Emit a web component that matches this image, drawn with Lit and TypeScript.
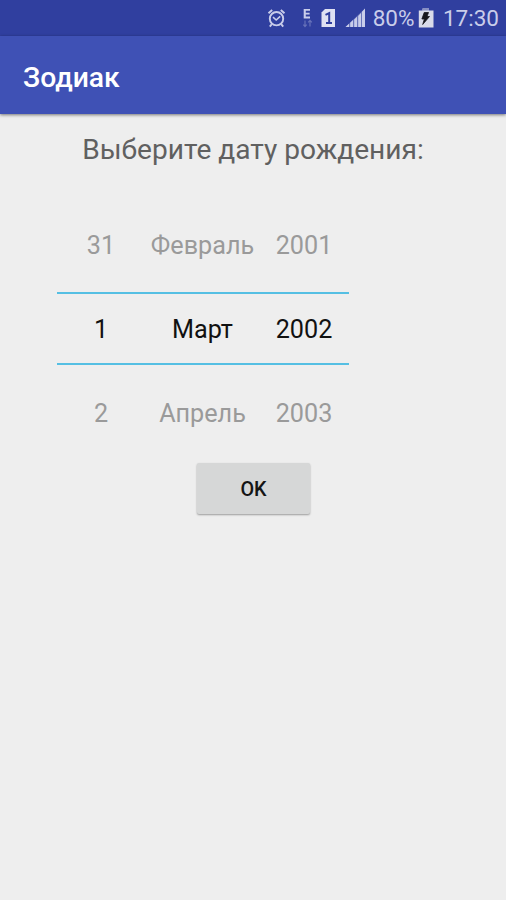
import { LitElement, html, css } from "lit";
import { customElement, property } from "lit/decorators.js";

@customElement("status-bar")
class StatusBar extends LitElement {
  static styles = css`
    :host {
      display: flex;
      align-items: center;
      justify-content: flex-end;
      box-sizing: border-box;
      height: 36px;
      padding-right: 7px;
      background: #303f9f;
      color: #c9cdea;
      font-size: 22.5px;
      line-height: 38px;
    }
    svg { display: block; }
    .icons { width: 99px; height: 36px; margin-right: 7px; }
    .battery { width: 16px; height: 36px; margin: 0 8.5px 0 4px; }
  `;
  render() {
    return html`
      <svg class="icons" viewBox="266 0 99 36">
        <g fill="none" stroke="#c9cdea" stroke-width="1.9">
          <circle cx="275.5" cy="18.7" r="6.7" />
          <path d="M267.5 13.3 271.2 10M279.8 10 283.5 13.3M270.8 24.2 268.8 26.7M280.2 24.2 282.2 26.7" />
          <path d="M272 17.2 275.2 20 279.2 16.4" stroke-width="1.6" />
        </g>
        <path d="M302.7 9h6.3v1.8h-4.2v2h3.8v1.7h-3.8v2.1h4.2v1.8h-6.3z" fill="#c9cdea" />
        <path d="M304 20.5v6M302.4 24.6 304 26.6 305.6 24.6M309 26.5v-6M307.1 22.3 309 20.4 310.9 22.3" fill="none" stroke="#6671b9" stroke-width="1.2" />
        <path d="M324 9h10v18h-13.5V12.6z" fill="#dfe1f2" />
        <path d="M324.5 14.8 328.2 13v10M325 23h6" fill="none" stroke="#303f9f" stroke-width="2" />
        <g fill="#c9cdea">
          <path d="M344.5 27 364 8.5V27z" opacity=".38" />
          <path d="M344.5 27 348 23.7V27zM349.2 22.7 352 20V27h-2.8zM353.2 19.5 356 16.8V27h-2.8zM357.2 16 360 13V27h-2.8zM361 11.8 364 8.5V27h-3z" />
        </g>
      </svg>
      <span>80%</span>
      <svg class="battery" viewBox="419 0 16 36">
        <path d="M423.5 8.5h6.5v2h4.5v17h-14.7v-17h3.7z" fill="#d9dbe9" />
        <path d="M423.5 8.5h6.5v2h-6.5z" fill="#8890c4" />
        <path d="M425.2 12.5h4.3l-1.5 4h2.5l-6.8 8 1.7-5.5h-2.5z" fill="#17171d" stroke="#17171d" stroke-width=".8" />
      </svg>
      <span>17:30</span>
    `;
  }
}

@customElement("wheel-column")
class WheelColumn extends LitElement {
  @property({ attribute: false }) values: string[] = [];
  static styles = css`
    :host {
      display: grid;
      grid-template-rows: 84.3px 84.3px 84.3px;
      justify-items: center;
      align-items: center;
      font-size: 25.2px;
      color: #9a9a9a;
      white-space: nowrap;
    }
    .current { color: #111; }
  `;
  render() {
    return this.values.map(
      (v, i) => html`<span class=${i === 1 ? "current" : "side"}>${v}</span>`
    );
  }
}

@customElement("app-root")
class AppRoot extends LitElement {
  static styles = css`
    :host {
      display: block;
      height: 900px;
      overflow: hidden;
      background: #eee;
      font-family: Roboto, "Noto Sans", sans-serif;
    }
    .toolbar {
      display: flex;
      align-items: center;
      box-sizing: border-box;
      height: 78px;
      padding: 4px 0 0 23px;
      background: #3f51b5;
      color: #fff;
      font-size: 28.3px;
      font-weight: 500;
      box-shadow: 0 1px 3px rgba(0, 0, 0, 0.5);
    }
    main { display: flex; flex-direction: column; align-items: center; }
    .prompt {
      margin-top: 18px;
      font-size: 28.1px;
      line-height: 36px;
      color: #606060;
      white-space: nowrap;
    }
    .picker {
      align-self: flex-start;
      display: grid;
      grid-template-columns: 88px 115px 88px;
      width: 292px;
      margin: 35px 0 0 57px;
      position: relative;
    }
    .band {
      position: absolute;
      left: 0;
      right: 0;
      top: 89px;
      height: 69px;
      border: solid #55bfe3;
      border-width: 2px 0;
    }
    button {
      width: 113px;
      height: 51px;
      margin-top: 7px;
      padding: 2px 0 0 1px;
      border: 0;
      border-radius: 2px;
      background: #d6d7d7;
      color: #151515;
      font: 500 19.8px Roboto, sans-serif;
      box-shadow: 0 1px 2px rgba(0, 0, 0, 0.35);
    }
  `;
  render() {
    return html`
      <status-bar></status-bar>
      <header class="toolbar">Зодиак</header>
      <main>
        <div class="prompt">Выберите дату рождения:</div>
        <div class="picker">
          <wheel-column .values=${["31", "1", "2"]}></wheel-column>
          <wheel-column .values=${["Февраль", "Март", "Апрель"]}></wheel-column>
          <wheel-column .values=${["2001", "2002", "2003"]}></wheel-column>
          <div class="band"></div>
        </div>
        <button>OK</button>
      </main>
    `;
  }
}
